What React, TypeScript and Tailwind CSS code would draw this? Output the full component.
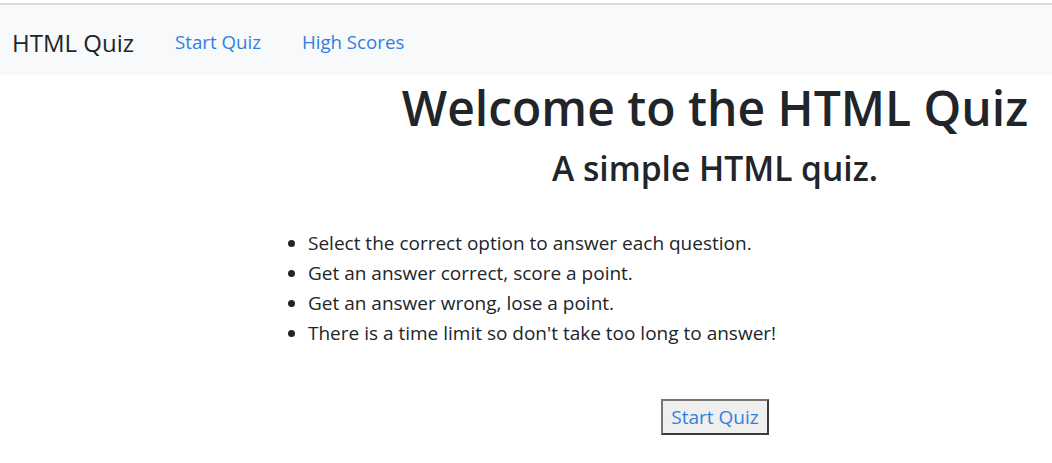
const rules = [
  'Select the correct option to answer each question.',
  'Get an answer correct, score a point.',
  'Get an answer wrong, lose a point.',
  "There is a time limit so don't take too long to answer!",
];

export default function App() {
  return (
    <div className="min-h-[463px] bg-white pt-[3px] text-[#212529] [font-family:'Open_Sans',sans-serif]">
      <div className="border-t-2 border-[#d8dadd]" />
      <nav className="flex h-[70px] items-center bg-[#f8f9fa] px-3 pt-[5px]">
        <span className="mr-[41px] text-[24px] leading-none">HTML Quiz</span>
        <a href="#" className="mr-[41px] text-[18.7px] text-[#2f7fe0]">Start Quiz</a>
        <a href="#" className="text-[18.7px] text-[#2f7fe0]">High Scores</a>
      </nav>

      <main className="pt-[4px]">
        <div className="ml-[378px] w-[674px] text-center">
          <h1 className="text-[48px] font-semibold leading-[1.2]">Welcome to the HTML Quiz</h1>
          <h3 className="mt-[11px] text-[33.6px] font-semibold leading-[1.2]">A simple HTML quiz.</h3>
        </div>

        <ul className="mt-[40px] ml-[268px] list-disc pl-[40px] text-[19px] leading-[30px]">
          {rules.map((r) => (
            <li key={r}>{r}</li>
          ))}
        </ul>

        <div className="ml-[378px] mt-[51px] w-[674px] text-center">
          <button className="h-[36px] border-2 border-[#3b3b3b] border-l-[#767676] border-t-[#767676] bg-[#efefef] px-[8px] text-[19px] text-[#2f7fe0]">
            Start Quiz
          </button>
        </div>
      </main>
    </div>
  );
}
